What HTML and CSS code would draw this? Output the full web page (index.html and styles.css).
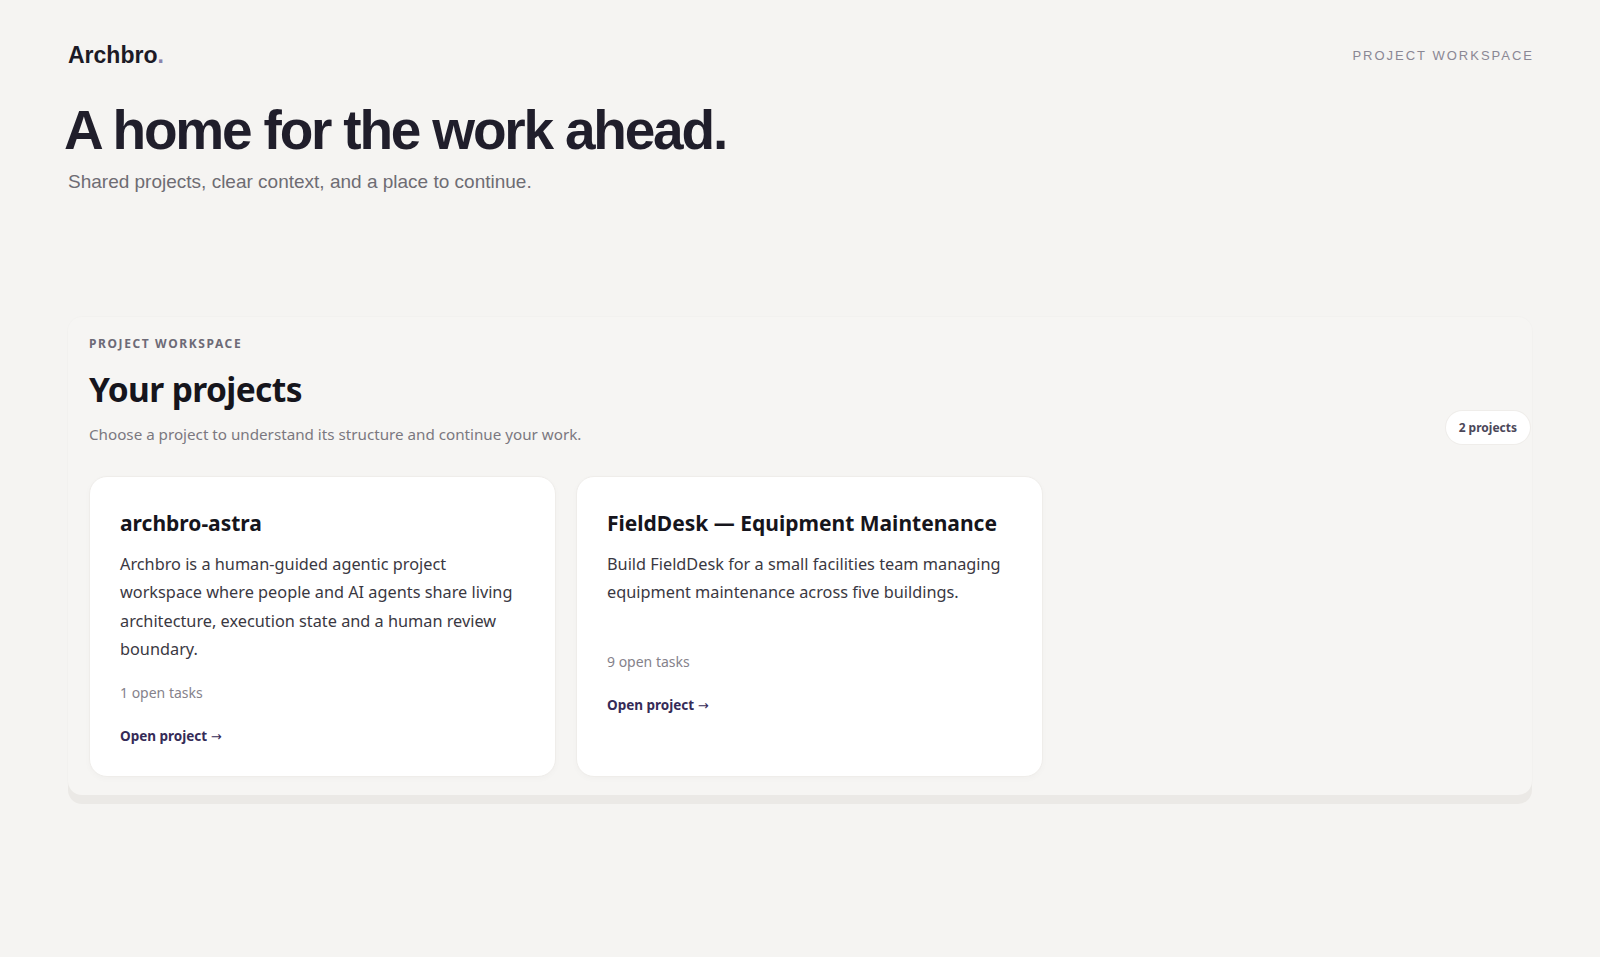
FILE: index.html
```html
<!DOCTYPE html>
<html lang="en">
  <head>
    <meta charset="UTF-8">
    <meta name="viewport" content="width=device-width, initial-scale=1.0">
    <title>Archbro • Projects</title>
    <link rel="stylesheet" href="styles.css">
  </head>
  <body>
    <header class="topbar">
      <div class="logo">Archbro<span class="logo-dot">.</span></div>
      <div class="topbar-label">Project Workspace</div>
    </header>

    <section class="hero">
      <h1>A home for the work ahead.</h1>
      <p>Shared projects, clear context, and a place to continue.</p>
    </section>

    <main class="workspace">
      <div class="workspace-head">
        <div>
          <div class="eyebrow">Project Workspace</div>
          <h2>Your projects</h2>
          <p class="lead">Choose a project to understand its structure and continue your work.</p>
        </div>
        <span class="count-pill">2 projects</span>
      </div>

      <div class="project-grid">
        <article class="project-card">
          <h3>archbro-astra</h3>
          <p class="project-desc">Archbro is a human-guided agentic project workspace where people and AI agents share living architecture, execution state and a human review boundary.</p>
          <div class="project-meta">1 open tasks</div>
          <a class="project-link" href="#">Open project <span class="arrow">→</span></a>
        </article>
        <article class="project-card">
          <h3>FieldDesk — Equipment Maintenance</h3>
          <p class="project-desc">Build FieldDesk for a small facilities team managing equipment maintenance across five buildings.</p>
          <div class="project-meta">9 open tasks</div>
          <a class="project-link" href="#">Open project <span class="arrow">→</span></a>
        </article>
      </div>
    </main>
  </body>
</html>
```

FILE: styles.css
```css
* {
  box-sizing: border-box;
}
html, body {
  margin: 0;
}
body {
  background: #f5f4f2;
  color: #1f1d29;
  font-family: "Liberation Sans", Arial, sans-serif;
  padding: 0 68px 60px;
}

/* top bar */
.topbar {
  display: flex;
  justify-content: space-between;
  align-items: center;
  height: 112px;
  padding-bottom: 2px;
}
.logo {
  font-size: 23px;
  font-weight: 700;
  color: #1c1a26;
}
.logo-dot {
  color: #8b84ad;
}
.topbar-label {
  font-size: 13px;
  letter-spacing: 2px;
  text-transform: uppercase;
  color: #8a8794;
  margin-right: -2px;
}

/* hero */
.hero {
  margin-top: -12px;
}
.hero h1 {
  margin: 0 0 0 -4px;
  font-size: 55px;
  line-height: 1.1;
  letter-spacing: -0.04em;
  font-weight: 700;
  color: #201e2b;
}
.hero p {
  margin: 10px 0 0;
  font-size: 19px;
  color: #6e6c73;
}

/* project workspace panel */
.workspace {
  margin-top: 124px;
  padding: 18px 2px 18px 21px;
  background: #f6f5f3;
  border-radius: 14px;
  box-shadow: 0 9px 0 #ebe9e6, 0 0 0 1px rgba(0, 0, 0, 0.012);
  font-family: "Noto Sans", "Open Sans", sans-serif;
}
.workspace-head {
  display: flex;
  justify-content: space-between;
  align-items: flex-end;
}
.eyebrow {
  font-size: 12px;
  font-weight: 700;
  letter-spacing: 1.6px;
  text-transform: uppercase;
  color: #6d6a76;
}
.workspace h2 {
  margin: 14px 0 0;
  font-size: 33.5px;
  letter-spacing: -0.6px;
  font-weight: 700;
  color: #16151c;
}
.lead {
  margin: 12px 0 0;
  font-size: 15.2px;
  color: #7b7880;
}
.count-pill {
  background: #fff;
  border-radius: 999px;
  padding: 8px 13px;
  font-size: 12px;
  font-weight: 700;
  color: #4b4759;
  box-shadow: 0 0 0 1px #efedea;
}

.project-grid {
  display: grid;
  grid-template-columns: repeat(3, 467px);
  gap: 20px;
  margin-top: 32px;
}
.project-card {
  background: #fff;
  border-radius: 18px;
  padding: 32px 30px 30px;
  border: 1px solid #efedea;
  box-shadow: 0 2px 6px rgba(0, 0, 0, 0.025);
}
.project-card h3 {
  margin: 0;
  font-size: 21px;
  font-weight: 700;
  color: #16151c;
}
.project-desc {
  margin: 13px 0 0;
  min-height: 83px;
  font-size: 16.3px;
  line-height: 28.6px;
  color: #3a3842;
}
.project-meta {
  margin-top: 19px;
  font-size: 14px;
  color: #85828b;
}
.project-link {
  display: inline-block;
  margin-top: 25px;
  font-size: 13.5px;
  font-weight: 700;
  color: #352b57;
  text-decoration: none;
}
.project-link .arrow {
  font-family: "DejaVu Sans", sans-serif;
  font-weight: 400;
  font-size: 13px;
}
```
